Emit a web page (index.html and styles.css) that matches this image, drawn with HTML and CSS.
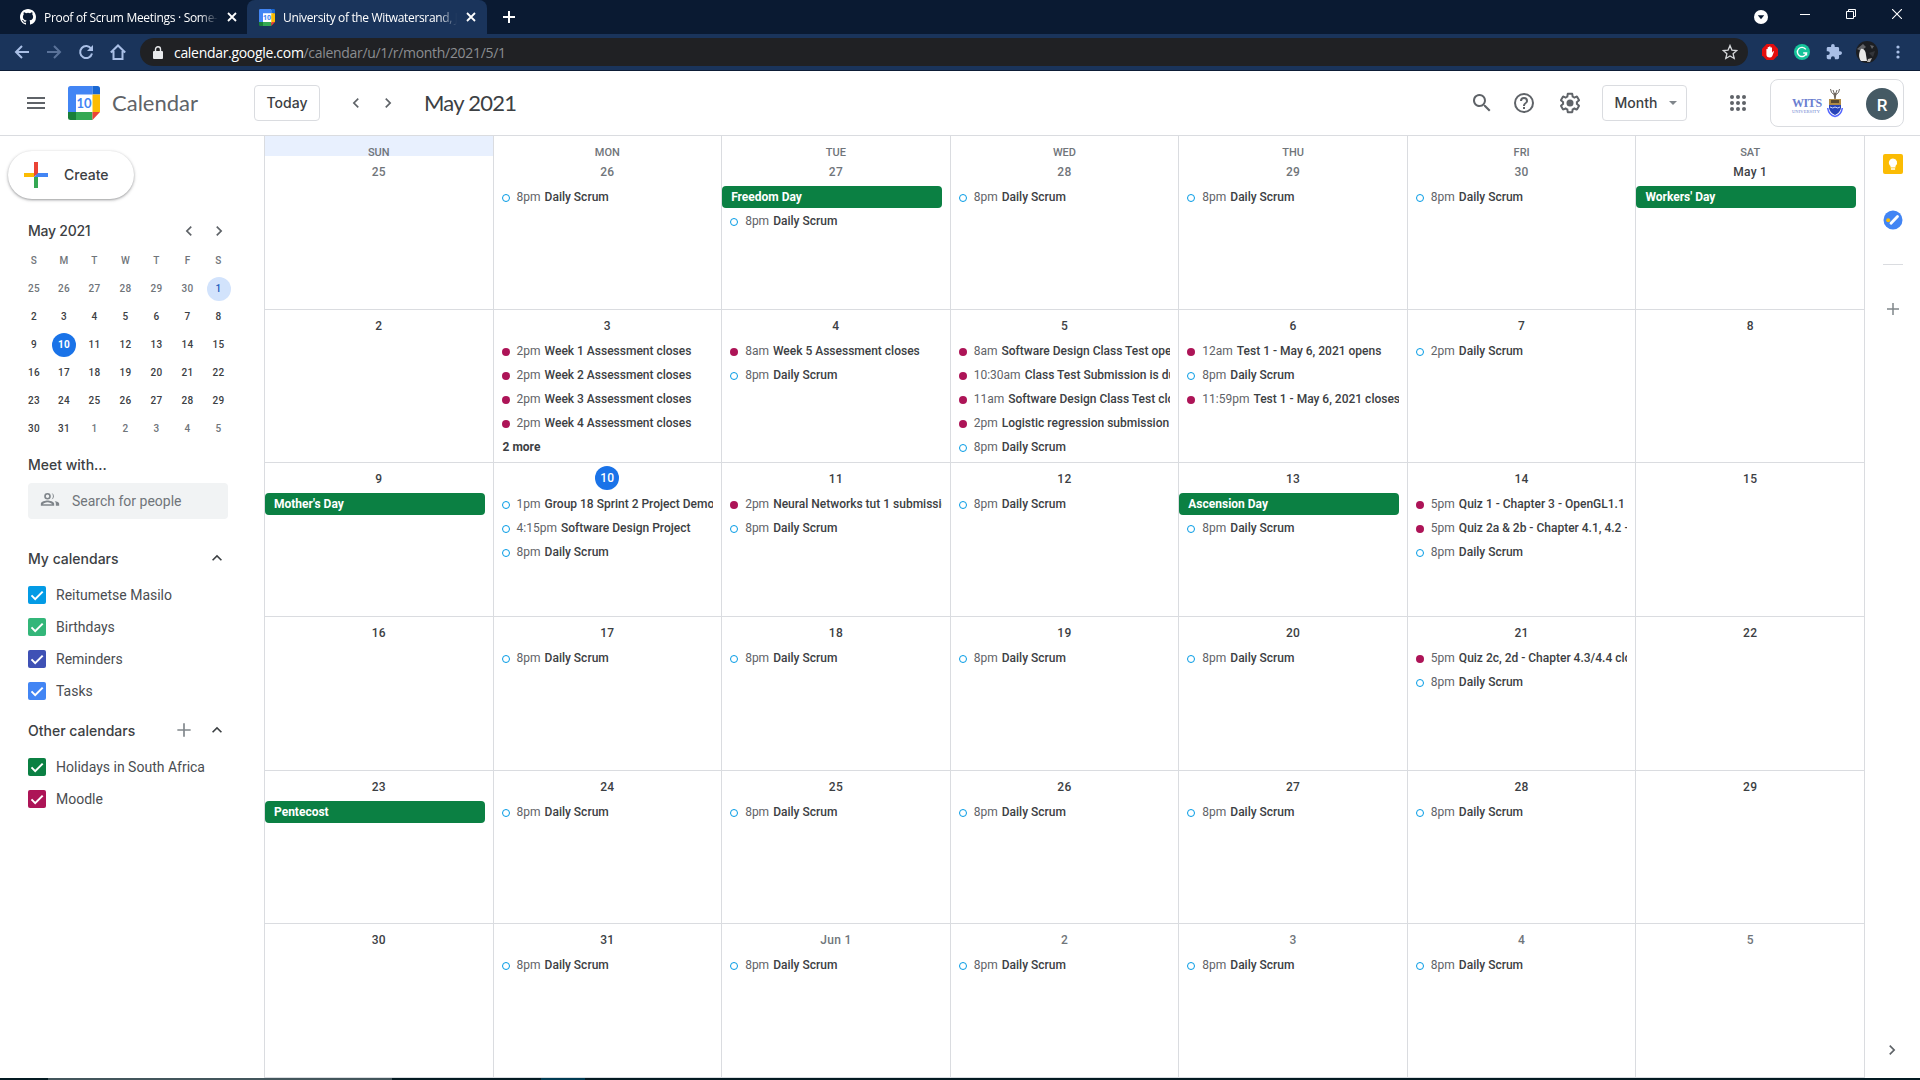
FILE: index.html
```html
<!DOCTYPE html>
<html lang="en">
<head>
<meta charset="utf-8">
<title>Calendar - May 2021</title>
<link rel="stylesheet" href="styles.css">
</head>
<body>
<svg width="0" height="0" class="defs">
<symbol id="left" viewBox="0 0 24 24"><path d="M15.4 7.4 14 6l-6 6 6 6 1.4-1.4L10.8 12z"/></symbol>
<symbol id="right" viewBox="0 0 24 24"><path d="M10 6 8.6 7.4l4.6 4.6-4.6 4.6L10 18l6-6z"/></symbol>
<symbol id="up" viewBox="0 0 24 24"><path d="m12 8-6 6 1.4 1.4 4.6-4.6 4.6 4.6L18 14z"/></symbol>
<symbol id="plus" viewBox="0 0 24 24"><path d="M20 13h-7v7h-2v-7H4v-2h7V4h2v7h7z"/></symbol>
<symbol id="x" viewBox="0 0 12 12"><path d="m2 2 8 8M10 2l-8 8" stroke="currentColor" stroke-width="1.8"/></symbol>
<symbol id="check" viewBox="0 0 18 18"><path d="m3.5 9.4 3.7 3.7L14.7 5.6" fill="none" stroke="#fff" stroke-width="2"/></symbol>
<symbol id="gcal" viewBox="0 0 32 34"><path d="M2 2h26v26H2z" fill="#fff"/><path d="M2.5 0H24.500V8.500H8V26H0V2.500A2.500 2.500 0 0 1 2.500 0z" fill="#4285f4"/><path d="M24.500 0h5A2.500 2.500 0 0 1 32 2.500v6h-7.500z" fill="#1967d2"/><path d="M24.500 8.500H32v17.500h-7.500z" fill="#fbbc04"/><path d="M8 26h16.500v8H8z" fill="#34a853"/><path d="M0 26h8v8H2.500A2.500 2.500 0 0 1 0 31.500z" fill="#188038"/><path d="M24.500 26H32l-7.500 8z" fill="#ea4335"/></symbol>
</svg>

<div class="tabs">
  <div class="tab">
    <svg class="fav" viewBox="0 0 16 16" fill="#fff"><path d="M8 0C3.580 0 0 3.580 0 8c0 3.540 2.290 6.530 5.470 7.590.4.070.55-.17.55-.38 0-.19-.01-.82-.01-1.490-2.010.37-2.530-.49-2.690-.94-.09-.23-.48-.94-.82-1.130-.28-.15-.68-.52-.01-.53.63-.01 1.080.58 1.230.82.72 1.210 1.870.87 2.330.66.070-.52.28-.87.51-1.070-1.780-.2-3.640-.89-3.640-3.950 0-.87.31-1.590.82-2.150-.08-.2-.36-1.020.08-2.120 0 0 .67-.21 2.200.82a7.600 7.600 0 0 1 4 0c1.530-1.040 2.200-.82 2.200-.82.44 1.100.16 1.920.08 2.120.51.56.82 1.270.82 2.150 0 3.070-1.870 3.750-3.650 3.950.29.25.54.73.54 1.480 0 1.070-.01 1.930-.01 2.200 0 .21.15.46.55.38A8 8 0 0 0 16 8c0-4.420-3.580-8-8-8z"/></svg>
    <span class="tab-title tab-git">Proof of Scrum Meetings · Some-</span>
    <svg class="tab-x"><use href="#x"/></svg>
  </div>
  <div class="tab active">
    <span class="fav cal-fav"><svg width="16" height="17"><use href="#gcal"/></svg><b>10</b></span>
    <span class="tab-title">University of the Witwatersrand, J</span>
    <svg class="tab-x"><use href="#x"/></svg>
  </div>
  <svg class="new-tab" viewBox="0 0 14 14"><path d="M7 1v12M1 7h12" stroke="#fff" stroke-width="2"/></svg>
  <div class="window-controls">
    <svg width="14" height="14" viewBox="0 0 14 14"><circle cx="7" cy="7" r="7" fill="#fff"/><path d="M3.800 5.300h6.400L7 9.200z" fill="#0a1a32"/></svg>
    <svg width="10" height="10" viewBox="0 0 10 10"><path d="M0 5.500h10" stroke="#fff"/></svg>
    <svg width="10" height="10" viewBox="0 0 10 10" fill="none" stroke="#fff"><path d="M.5 2.500h7v7h-7zM2.500 2.500v-2h7v7h-2"/></svg>
    <svg width="10" height="10" viewBox="0 0 10 10"><path d="m0 0 10 10M10 0 0 10" stroke="#fff" stroke-width="1.100"/></svg>
  </div>
</div>

<div class="toolbar">
  <div class="nav">
    <svg viewBox="0 0 16 16"><path d="M15 8H2.500M8 2 2 8l6 6"/></svg>
    <svg viewBox="0 0 16 16" class="dim"><path d="M1 8h12.500M8 2l6 6-6 6"/></svg>
    <svg viewBox="0 0 16 16"><path d="M13.200 4.800A6 6 0 1 0 14 9.500"/><path d="M15 1v6H9z" fill="#a9bfe6" stroke="none"/></svg>
    <svg viewBox="0 0 16 16"><path d="M.8 8.500 8 1.500l7.200 7M3.500 7v8h9V7"/></svg>
  </div>
  <div class="omnibox">
    <svg width="10" height="13" viewBox="0 0 10 13"><path d="M1 5h8a1 1 0 0 1 1 1v6a1 1 0 0 1-1 1H1a1 1 0 0 1-1-1V6a1 1 0 0 1 1-1z" fill="#e8eaed"/><path d="M2.500 5V3.300a2.500 2.500 0 0 1 5 0V5" fill="none" stroke="#e8eaed" stroke-width="1.400"/></svg>
    <span class="url">calendar.google.com<i>/calendar/u/1/r/month/2021/5/1</i></span>
    <svg class="star" viewBox="0 0 16 16"><path d="m8 1.500 1.900 4.600 4.900.4-3.700 3.200 1.100 4.800L8 12l-4.200 2.500 1.100-4.800L1.200 6.500l4.900-.4z" fill="none" stroke="#d5d7da" stroke-width="1.300"/></svg>
  </div>
  <div class="extensions">
    <svg width="16" height="16" viewBox="0 0 16 16"><path d="M4.700 0h6.600L16 4.700v6.600L11.300 16H4.700L0 11.300V4.700z" fill="#e40d0d"/><path d="M4.400 8.300V5.200q.8-.8 1.300 0V3.300q.8-.8 1.400 0v-.6q.8-.9 1.500 0v1q.8-.7 1.400.1v5l1-1.500q.9-.3 1 .3L10.300 12q-.8 1.500-2.500 1.500-3.400 0-3.400-3.300z" fill="#fff"/></svg>
    <svg width="16" height="16" viewBox="0 0 16 16"><circle cx="8" cy="8" r="8" fill="#15c39a"/><path d="M11.800 5.300A4.600 4.600 0 1 0 12.500 9H9.200M12.500 9v2.500" fill="none" stroke="#fff" stroke-width="1.400"/></svg>
    <svg width="16" height="16" viewBox="1 1 22 22" fill="#a9bfe6"><path d="M20.500 11H19V7a2 2 0 0 0-2-2h-4V3.500a2.500 2.500 0 0 0-5 0V5H4a2 2 0 0 0-2 2v3.800h1.500a2.700 2.700 0 0 1 0 5.400H2V20c0 1.100.9 2 2 2h3.800v-1.500a2.700 2.700 0 0 1 5.400 0V22H17a2 2 0 0 0 2-2v-4h1.500a2.500 2.500 0 0 0 0-5z"/></svg>
    <svg width="22" height="22" viewBox="0 0 22 22"><circle cx="11" cy="11" r="11" fill="#1c1e22"/><path d="M1 8 7 3l3 3-5 4zM14 4l4 1-2 3z" fill="#626367"/><path d="M5 8c3-1 5 3 5 6l1 6H5C2 16 3 11 5 8z" fill="#e8e8e8"/><path d="m13 12 6-2-2 6z" fill="#34363b"/><path d="m12 18 4-1-2 4h-3z" fill="#b8b4b0"/></svg>
    <svg width="4" height="14" viewBox="0 0 4 14" fill="#a9bfe6"><circle cx="2" cy="2" r="1.600"/><circle cx="2" cy="7" r="1.600"/><circle cx="2" cy="12" r="1.600"/></svg>
  </div>
</div>

<header class="header">
  <svg class="menu" viewBox="0 0 18 12"><path d="M0 1h18M0 6h18M0 11h18" stroke="#5f6368" stroke-width="2"/></svg>
  <div class="logo"><svg width="32" height="34"><use href="#gcal"/></svg><b>10</b></div>
  <span class="brand">Calendar</span>
  <button class="box today-btn">Today</button>
  <div class="pager"><svg><use href="#left"/></svg><svg><use href="#right"/></svg></div>
  <h1>May 2021</h1>
  <div class="tools">
    <svg viewBox="0 0 24 24"><path d="M15.500 14h-.8l-.3-.3A6.500 6.500 0 1 0 13.700 14.400l.3.300v.8l5 5 1.500-1.500zm-6 0a4.500 4.500 0 1 1 0-9 4.500 4.500 0 0 1 0 9z"/></svg>
    <svg viewBox="0 0 24 24"><path d="M11 18h2v-2h-2v2zm1-16a10 10 0 1 0 0 20 10 10 0 0 0 0-20zm0 18a8 8 0 1 1 0-16 8 8 0 0 1 0 16zm0-14a4 4 0 0 0-4 4h2a2 2 0 1 1 4 0c0 2-3 1.750-3 5h2c0-2.250 3-2.500 3-5a4 4 0 0 0-4-4z"/></svg>
    <svg viewBox="0 0 24 24"><path d="M13.850 22.250h-3.700c-.74 0-1.360-.54-1.450-1.270l-.27-1.890c-.27-.14-.53-.29-.79-.46l-1.800.72c-.7.260-1.470-.03-1.810-.65L2.200 15.530c-.35-.66-.2-1.440.36-1.880l1.530-1.190c-.01-.15-.02-.3-.02-.46 0-.15.010-.31.020-.46l-1.520-1.190c-.59-.45-.74-1.260-.37-1.880l1.850-3.190c.34-.62 1.110-.9 1.790-.63l1.810.73c.26-.17.52-.32.78-.46l.27-1.910c.09-.7.710-1.250 1.440-1.250h3.700c.74 0 1.360.54 1.450 1.270l.27 1.890c.27.140.53.290.79.460l1.800-.72c.71-.26 1.480.03 1.820.65l1.840 3.180c.36.660.2 1.440-.36 1.880l-1.520 1.190c.01.150.02.300.02.460s-.01.310-.02.460l1.520 1.190c.56.450.72 1.230.37 1.860l-1.860 3.220c-.34.620-1.110.9-1.800.63l-1.800-.72c-.26.170-.52.320-.78.460l-.27 1.910c-.1.680-.72 1.220-1.460 1.220zm-3.230-2h2.760l.37-2.550.53-.22c.44-.18.880-.44 1.340-.78l.45-.34 2.380.96 1.380-2.400-2.030-1.580.07-.56c.03-.26.060-.51.060-.78s-.03-.53-.06-.78l-.07-.56 2.030-1.580-1.390-2.400-2.390.96-.45-.35c-.42-.32-.87-.58-1.330-.77l-.52-.22-.37-2.550h-2.760l-.37 2.550-.53.210c-.44.190-.88.440-1.340.79l-.45.330-2.380-.95-1.390 2.390 2.030 1.580-.07.56a7 7 0 0 0-.06.79c0 .26.020.53.060.78l.07.56-2.030 1.580 1.380 2.400 2.390-.96.450.35c.43.330.86.580 1.330.77l.53.220z"/><circle cx="12" cy="12" r="3.500"/></svg>
  </div>
  <button class="box view-btn">Month<span class="caret"></span></button>
  <svg class="apps" viewBox="0 0 16 16" fill="#5f6368"><circle cx="2" cy="2" r="2"/><circle cx="8" cy="2" r="2"/><circle cx="14" cy="2" r="2"/><circle cx="2" cy="8" r="2"/><circle cx="8" cy="8" r="2"/><circle cx="14" cy="8" r="2"/><circle cx="2" cy="14" r="2"/><circle cx="8" cy="14" r="2"/><circle cx="14" cy="14" r="2"/></svg>
  <div class="account">
    <div class="wits"><b>WITS</b><small>UNIVERSITY</small></div>
    <svg class="crest" viewBox="0 0 16 30"><path d="M3.500 1q0 4 4 6M12.500 1q0 4-4 6M6 2l1.500 4M10 2 8.500 6" fill="none" stroke="#6b6560"/><path d="M6.500 5h3l-.8 6H7.300z" fill="#70675f"/><path d="M2 11h12v9q-1 5-6 7-5-2-6-7z" fill="#2743b8"/><path d="M2 11h12v6H2z" fill="#b08a45"/><path d="M4 12h8v3H4z" fill="#59482f"/><path d="M3 19q3 2 5 0 3 2 5 0" stroke="#cdd5ff" fill="none"/><path d="M.7 20q1 7 7.300 8.500Q14.300 27 15.300 20" fill="none" stroke="#5668ff" stroke-width="1.500"/></svg>
    <span class="avatar">R</span>
  </div>
</header>

<main class="main">
<aside class="sidebar">
  <button class="create"><svg width="24" height="26" viewBox="0 0 24 26"><path d="M10 0h4v13h-4z" fill="#ea4335"/><path d="M0 11h10v4H0z" fill="#fbbc04"/><path d="M10 15h4v11h-4z" fill="#34a853"/><path d="M14 11h10v4H14z" fill="#4285f4"/><path d="M10 15v-4h4z" fill="#ea4335"/><path d="M10 15h4v-4z" fill="#4285f4"/></svg><span>Create</span></button>
  <div class="mini-head"><span>May 2021</span><svg><use href="#left"/></svg><svg><use href="#right"/></svg></div>
  <div class="mini">
    <i>S</i><i>M</i><i>T</i><i>W</i><i>T</i><i>F</i><i>S</i>
    <i>25</i><i>26</i><i>27</i><i>28</i><i>29</i><i>30</i><span class="selected">1</span>
    <span>2</span><span>3</span><span>4</span><span>5</span><span>6</span><span>7</span><span>8</span>
    <span>9</span><span class="now">10</span><span>11</span><span>12</span><span>13</span><span>14</span><span>15</span>
    <span>16</span><span>17</span><span>18</span><span>19</span><span>20</span><span>21</span><span>22</span>
    <span>23</span><span>24</span><span>25</span><span>26</span><span>27</span><span>28</span><span>29</span>
    <span>30</span><span>31</span><i>1</i><i>2</i><i>3</i><i>4</i><i>5</i>
  </div>
  <div class="section meet">Meet with...</div>
  <div class="search"><svg width="20" height="20" viewBox="0 0 24 24" fill="#80868b"><path d="M9 12.500c-2.500 0-8 1.300-8 4V19h16v-2.500c0-2.700-5.500-4-8-4zM3.500 17c.7-1 3-2.300 5.500-2.300s4.800 1.300 5.500 2.300zM9 11.500a4 4 0 1 0 0-8 4 4 0 0 0 0 8zm0-6a2 2 0 1 1 0 4 2 2 0 0 1 0-4zM17.500 13.100c1.100.8 1.500 2 1.500 3.400V19h4v-2.500c0-1.800-2.500-2.900-5.500-3.400zM14 11.300a4 4 0 0 0 0-7.600 6 6 0 0 1 0 7.600z"/></svg>Search for people</div>
  <div class="section mine"><span>My calendars</span><svg><use href="#up"/></svg></div>
  <ul>
    <li><svg class="c-blue"><use href="#check"/></svg>Reitumetse Masilo</li>
    <li><svg class="c-mint"><use href="#check"/></svg>Birthdays</li>
    <li><svg class="c-indigo"><use href="#check"/></svg>Reminders</li>
    <li><svg class="c-azure"><use href="#check"/></svg>Tasks</li>
  </ul>
  <div class="section other"><span>Other calendars</span><svg class="add"><use href="#plus"/></svg><svg><use href="#up"/></svg></div>
  <ul>
    <li><svg class="c-green"><use href="#check"/></svg>Holidays in South Africa</li>
    <li><svg class="c-plum"><use href="#check"/></svg>Moodle</li>
  </ul>
</aside>

<section class="month">
  <div class="day first"><h2>SUN</h2><h3 class="off">25</h3></div>
  <div class="day"><h2>MON</h2><h3 class="off">26</h3><p><time>8pm</time>Daily Scrum</p></div>
  <div class="day"><h2>TUE</h2><h3 class="off">27</h3><div class="chip">Freedom Day</div><p><time>8pm</time>Daily Scrum</p></div>
  <div class="day"><h2>WED</h2><h3 class="off">28</h3><p><time>8pm</time>Daily Scrum</p></div>
  <div class="day"><h2>THU</h2><h3 class="off">29</h3><p><time>8pm</time>Daily Scrum</p></div>
  <div class="day"><h2>FRI</h2><h3 class="off">30</h3><p><time>8pm</time>Daily Scrum</p></div>
  <div class="day"><h2>SAT</h2><h3>May 1</h3><div class="chip">Workers' Day</div></div>

  <div class="day"><h3>2</h3></div>
  <div class="day"><h3>3</h3><p class="m"><time>2pm</time>Week 1 Assessment closes</p><p class="m"><time>2pm</time>Week 2 Assessment closes</p><p class="m"><time>2pm</time>Week 3 Assessment closes</p><p class="m"><time>2pm</time>Week 4 Assessment closes</p><div class="more">2 more</div></div>
  <div class="day"><h3>4</h3><p class="m"><time>8am</time>Week 5 Assessment closes</p><p><time>8pm</time>Daily Scrum</p></div>
  <div class="day"><h3>5</h3><p class="m"><time>8am</time>Software Design Class Test opens</p><p class="m"><time>10:30am</time>Class Test Submission is due</p><p class="m"><time>11am</time>Software Design Class Test closes</p><p class="m"><time>2pm</time>Logistic regression submission</p><p><time>8pm</time>Daily Scrum</p></div>
  <div class="day"><h3>6</h3><p class="m"><time>12am</time>Test 1 - May 6, 2021 opens</p><p><time>8pm</time>Daily Scrum</p><p class="m"><time>11:59pm</time>Test 1 - May 6, 2021 closes</p></div>
  <div class="day"><h3>7</h3><p><time>2pm</time>Daily Scrum</p></div>
  <div class="day"><h3>8</h3></div>

  <div class="day"><h3>9</h3><div class="chip">Mother's Day</div></div>
  <div class="day"><h3><span class="today">10</span></h3><p><time>1pm</time>Group 18 Sprint 2 Project Demo</p><p><time>4:15pm</time>Software Design Project</p><p><time>8pm</time>Daily Scrum</p></div>
  <div class="day"><h3>11</h3><p class="m"><time>2pm</time>Neural Networks tut 1 submission</p><p><time>8pm</time>Daily Scrum</p></div>
  <div class="day"><h3>12</h3><p><time>8pm</time>Daily Scrum</p></div>
  <div class="day"><h3>13</h3><div class="chip">Ascension Day</div><p><time>8pm</time>Daily Scrum</p></div>
  <div class="day"><h3>14</h3><p class="m"><time>5pm</time>Quiz 1 - Chapter 3 - OpenGL1.1</p><p class="m"><time>5pm</time>Quiz 2a &amp; 2b - Chapter 4.1, 4.2 -</p><p><time>8pm</time>Daily Scrum</p></div>
  <div class="day"><h3>15</h3></div>

  <div class="day"><h3>16</h3></div>
  <div class="day"><h3>17</h3><p><time>8pm</time>Daily Scrum</p></div>
  <div class="day"><h3>18</h3><p><time>8pm</time>Daily Scrum</p></div>
  <div class="day"><h3>19</h3><p><time>8pm</time>Daily Scrum</p></div>
  <div class="day"><h3>20</h3><p><time>8pm</time>Daily Scrum</p></div>
  <div class="day"><h3>21</h3><p class="m"><time>5pm</time>Quiz 2c, 2d - Chapter 4.3/4.4 closes</p><p><time>8pm</time>Daily Scrum</p></div>
  <div class="day"><h3>22</h3></div>

  <div class="day"><h3>23</h3><div class="chip">Pentecost</div></div>
  <div class="day"><h3>24</h3><p><time>8pm</time>Daily Scrum</p></div>
  <div class="day"><h3>25</h3><p><time>8pm</time>Daily Scrum</p></div>
  <div class="day"><h3>26</h3><p><time>8pm</time>Daily Scrum</p></div>
  <div class="day"><h3>27</h3><p><time>8pm</time>Daily Scrum</p></div>
  <div class="day"><h3>28</h3><p><time>8pm</time>Daily Scrum</p></div>
  <div class="day"><h3>29</h3></div>

  <div class="day"><h3>30</h3></div>
  <div class="day"><h3>31</h3><p><time>8pm</time>Daily Scrum</p></div>
  <div class="day"><h3 class="off">Jun 1</h3><p><time>8pm</time>Daily Scrum</p></div>
  <div class="day"><h3 class="off">2</h3><p><time>8pm</time>Daily Scrum</p></div>
  <div class="day"><h3 class="off">3</h3><p><time>8pm</time>Daily Scrum</p></div>
  <div class="day"><h3 class="off">4</h3><p><time>8pm</time>Daily Scrum</p></div>
  <div class="day"><h3 class="off">5</h3></div>
</section>

<aside class="rail">
  <svg width="20" height="20" viewBox="0 0 20 20"><rect width="20" height="20" rx="2" fill="#fbbc04"/><path d="M10 4.500a4.200 4.200 0 0 0-2.500 7.500v1.500h5V12A4.200 4.200 0 0 0 10 4.500zM7.900 14.300h4.200v1.400H7.900z" fill="#fff"/></svg>
  <svg width="20" height="20" viewBox="0 0 20 20"><circle cx="10" cy="10" r="9.500" fill="#4285f4"/><path d="m8 13.200 6.500-6.700" stroke="#fff" stroke-width="2.800" stroke-linecap="round"/><circle cx="5.200" cy="10.200" r="2" fill="#fbbc04"/></svg>
  <hr>
  <svg class="rail-plus" width="18" height="18"><use href="#plus"/></svg>
  <svg class="rail-open" width="20" height="20"><use href="#right"/></svg>
</aside>
</main>
<div class="taskbar"><span></span><em></em></div>
</body>
</html>
```
FILE: styles.css
```css
*, *::before { box-sizing: border-box; }
body {
  margin: 0;
  width: 1920px;
  height: 1080px;
  overflow: hidden;
  display: flex;
  flex-direction: column;
  font-family: Roboto, sans-serif;
  color: #3c4043;
  background: #fff;
}
button, h1, h2, h3, p, ul { margin: 0; padding: 0; font: inherit; color: inherit; }
svg { flex: none; display: block; }
i { font-style: normal; }
.defs { position: absolute; }

/* Browser frame */
.tabs {
  height: 34px;
  flex: none;
  display: flex;
  align-items: center;
  background: #0a1a32;
  font: 12px "Open Sans", sans-serif;
  color: #fff;
}
.tab { width: 247px; height: 34px; display: flex; align-items: center; padding-left: 20px; }
.tab.active { width: 240px; padding-left: 12px; background: #1a345b; border-radius: 8px 8px 0 0; }
.fav { width: 16px; height: 16px; margin-right: 8px; flex: none; }
.cal-fav { display: grid; color: #4285f4; font-size: 7px; line-height: 17px; text-align: center; }
.cal-fav > * { grid-area: 1 / 1; }
.tab-title {
  width: 174px;
  overflow: hidden;
  white-space: nowrap;
  letter-spacing: -.35px;
  -webkit-mask-image: linear-gradient(90deg, #000 155px, transparent);
}
.tab-git { letter-spacing: -.3px; }
.tab-x { width: 12px; height: 12px; margin-left: 8px; color: #fff; }
.new-tab { width: 14px; height: 14px; margin-left: 15px; }
.window-controls { display: flex; align-items: flex-start; align-self: flex-start; margin-left: auto; padding: 9px 18px 0 0; gap: 36px; }
.window-controls svg:first-child { margin: 1px -4px 0 0; }
.toolbar {
  height: 37px;
  flex: none;
  display: flex;
  align-items: center;
  background: #1a345b;
  border-bottom: 1px solid #0d1d36;
}
.nav { width: 140px; display: flex; gap: 16px; padding-left: 14px; }
.nav svg { width: 16px; height: 16px; fill: none; stroke: #a9bfe6; stroke-width: 2; }
.nav .dim { opacity: .45; }
.omnibox {
  width: 1608px;
  height: 28px;
  border-radius: 14px;
  background: #202124;
  display: flex;
  align-items: center;
  padding: 0 10px 0 13px;
  color: #fff;
  font: 14px "Open Sans", sans-serif;
}
.url { margin-left: 11px; letter-spacing: -.31px; }
.url i { color: #8b8d91; }
.star { width: 16px; height: 16px; margin-left: auto; }
.extensions { display: flex; align-items: center; gap: 16px; padding-left: 14px; }
.extensions svg:nth-child(4) { margin: 0 2px 0 -2px; }

/* Application header */
.header {
  height: 65px;
  flex: none;
  display: flex;
  align-items: center;
  border-bottom: 1px solid #dadce0;
  font-family: Lato, sans-serif;
}
.menu { width: 18px; height: 12px; margin-left: 27px; }
.logo { display: grid; place-items: center; width: 32px; margin-left: 23px; color: #4285f4; font-size: 13px; }
.logo > * { grid-area: 1 / 1; }
.brand { width: 142px; margin-left: 12px; padding-bottom: 1px; font-size: 22px; color: #5f6368; }
.box {
  height: 36px;
  padding-bottom: 2px;
  border: 1px solid #dadce0;
  border-radius: 4px;
  background: #fff;
  font: 500 14px Inter, sans-serif;
  display: flex;
  align-items: center;
  justify-content: center;
}
.today-btn { width: 66px; }
.pager { display: flex; gap: 12px; margin-left: 26px; width: 78px; }
.pager svg { width: 20px; height: 20px; fill: #5f6368; }
h1 { padding-bottom: 2px; font-size: 22px; letter-spacing: -.75px; }
.tools { display: flex; margin-left: auto; gap: 18px; fill: #5f6368; }
.tools svg { width: 24px; height: 24px; }
.tools svg:nth-child(3) { margin-left: 4px; }
.view-btn { width: 85px; margin-left: 20px; padding-left: 3px; gap: 12px; }
.caret { margin-top: 2px; border: 4px solid transparent; border-top: 4px solid #80868b; border-bottom: 0; }
.apps { width: 16px; height: 16px; margin-left: 43px; }
.account {
  width: 134px;
  height: 48px;
  margin: 0 16px 0 24px;
  border: 1px solid #dadce0;
  border-radius: 8px;
  display: flex;
  align-items: center;
  padding-left: 21px;
}
.wits { width: 31px; padding-top: 7px; display: flex; flex-direction: column; color: #6b7fd0; font: 12px/11px "Liberation Serif", serif; }
.wits b { letter-spacing: -.4px; }
.wits small { font-size: 4.500px; line-height: 6px; letter-spacing: .1px; }
.crest { width: 16px; height: 30px; margin-left: 4px; }
.avatar {
  width: 32px;
  height: 32px;
  margin: 2px 0 0 23px;
  border-radius: 50%;
  background: #455a64;
  color: #fff;
  font: 500 17px/34px Roboto, sans-serif;
  text-align: center;
}

/* Sidebar */
.main { height: 942px; display: flex; }
.sidebar { width: 264px; padding-top: 15px; font-size: 14px; }
.create {
  width: 126px;
  height: 48px;
  margin-left: 8px;
  padding-left: 16px;
  display: flex;
  align-items: center;
  gap: 16px;
  border: 0;
  border-radius: 24px;
  background: #fff;
  box-shadow: 0 1px 2px rgba(60, 64, 67, .35), 0 1px 3px 1px rgba(60, 64, 67, .16);
  font: 500 14px Inter, sans-serif;
}
.create span { padding-bottom: 2px; }
.mini-head { display: flex; align-items: center; height: 20px; margin: 22px 0 0 28px; font: 500 14px Inter, sans-serif; }
.mini-head span { width: 151px; padding-bottom: 2px; letter-spacing: -.25px; }
.mini-head svg { width: 20px; height: 20px; margin-right: 10px; fill: #5f6368; }
.mini {
  display: grid;
  grid-template-columns: 30px 30px repeat(5, 31px);
  grid-auto-rows: 28px;
  place-items: center;
  margin: 6px 0 0 19px;
  font-size: 10px;
  font-weight: 500;
  line-height: 24px;
  letter-spacing: .2px;
}
.mini > * { width: 24px; height: 24px; text-align: center; }
.mini i { color: #70757a; }
.mini .selected { border-radius: 50%; background: #d2e3fc; color: #185abc; }
.mini .now { border-radius: 50%; background: #1a73e8; color: #fff; font-weight: 700; }
.section { display: flex; align-items: center; height: 20px; margin-left: 28px; padding-right: 37px; font: 500 14px Inter, sans-serif; }
.section span { flex: 1; }
.section svg { width: 20px; height: 20px; fill: #3c4043; }
.section .add { margin-right: 13px; fill: #80868b; }
.meet { margin-top: 11px; }
.search {
  width: 200px;
  height: 36px;
  margin: 9px 0 0 28px;
  padding-left: 12px;
  display: flex;
  align-items: center;
  gap: 12px;
  border-radius: 4px;
  background: #f1f3f4;
  color: #70757a;
}
.search svg { margin-bottom: 3px; }
.mine { margin-top: 29px; }
.other { margin-top: 13px; }
ul { list-style: none; padding: 11px 0 0 28px; }
li { height: 32px; display: flex; align-items: center; gap: 10px; line-height: 30px; padding-bottom: 1px; color: #4a4d51; }
li svg { width: 18px; height: 18px; margin-top: 1px; border-radius: 2px; }
.c-blue { background: #039be5; }
.c-mint { background: #33b679; }
.c-indigo { background: #3f51b5; }
.c-azure { background: #4285f4; }
.c-green { background: #0b8043; }
.c-plum { background: #ad1457; }

/* Month grid */
.month {
  width: 1601px;
  display: grid;
  grid-template-columns: repeat(7, 1fr);
  grid-template-rows: 174px 153px 154px 154px 153px 154px;
  border-left: 1px solid #dadce0;
}
.day {
  min-width: 0;
  overflow: hidden;
  border-right: 1px solid #dadce0;
  border-bottom: 1px solid #dadce0;
  padding: 5px 8px 0 0;
  font-size: 12px;
}
.day.first { background: linear-gradient(#e8f0fe 20px, #fff 20px); }
.day h2 { height: 20px; padding: 5px 0 0 8px; font-size: 11px; font-weight: 500; line-height: 14px; text-align: center; color: #70757a; }
.day h3 { height: 24px; margin: 0 0 1px 8px; font-weight: 500; line-height: 22px; letter-spacing: .3px; text-align: center; }
.day h2 + h3 { height: 24px; line-height: 22px; }
.day h3.off { color: #70757a; }
.day h3:has(.today) { display: flex; justify-content: center; }
.today { width: 24px; height: 24px; margin-top: -2px; border-radius: 50%; background: #1a73e8; color: #fff; line-height: 25px; }
.chip { height: 22px; margin-bottom: 2px; padding-left: 9px; border-radius: 4px; background: #0b8043; color: #fff; font-weight: 700; line-height: 22px; }
.day p { height: 22px; margin-bottom: 2px; padding-left: 8px; overflow: hidden; white-space: nowrap; font-weight: 500; line-height: 22px; }
.day p::before { content: ""; display: inline-block; width: 8px; height: 8px; margin-right: 7px; border: 1.500px solid #039be5; border-radius: 50%; vertical-align: -.5px; }
.day p.m::before { border: 0; background: #ad1457; }
.day time { margin-right: 4px; font-weight: 400; color: #5f6368; }
.more { padding-left: 9px; font-weight: 700; line-height: 22px; }

/* Right rail */
.rail { width: 55px; padding: 18px 0 18px 18px; display: flex; flex-direction: column; }
.rail svg:nth-child(2) { margin-top: 36px; }
.rail hr { width: 20px; height: 1px; margin: 34px 0 35px; border: 0; background: #dadce0; }
.rail-plus { margin-left: 1px; fill: #80868b; }
.rail-open { margin-top: auto; margin-left: -1px; fill: #5f6368; }
.taskbar { height: 2px; flex: none; display: flex; background: #041a22; }
.taskbar span { width: 344px; margin-left: 48px; background: #43565c; }
.taskbar em { width: 44px; margin-left: 149px; background: #003b52; }
```
